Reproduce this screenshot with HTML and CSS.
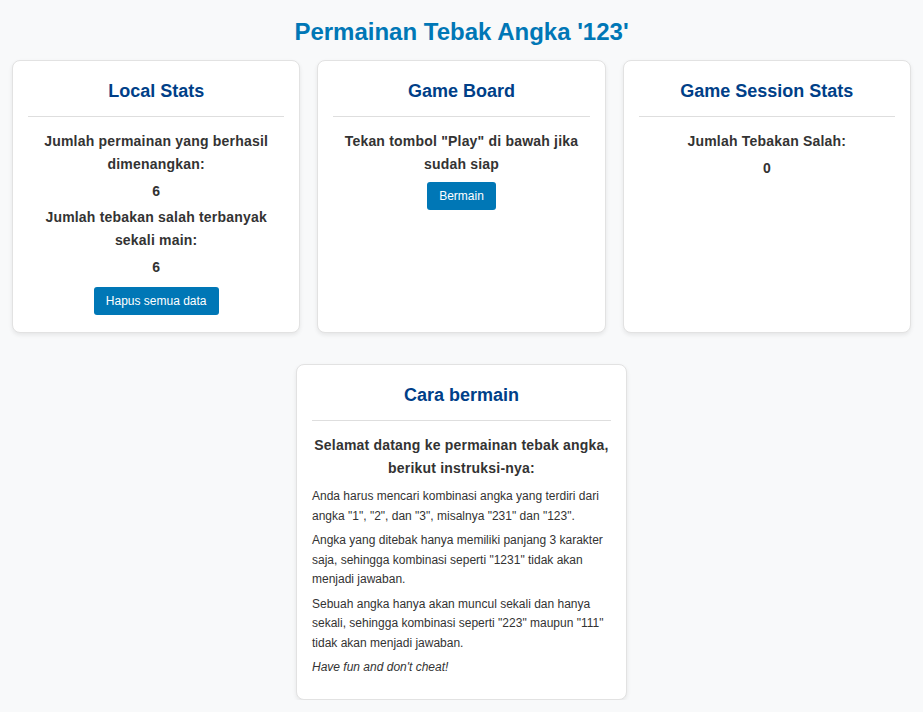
FILE: index.html
```html
<!DOCTYPE html>
<html lang="id">
<head>
<meta charset="utf-8">
<title>Permainan Tebak Angka '123'</title>
<link rel="stylesheet" href="styles.css">
</head>
<body>
<h1 class="title">Permainan Tebak Angka '123'</h1>
<main class="row">
  <section class="card">
    <h2 class="card-title">Local Stats</h2>
    <hr class="divider">
    <p class="label">Jumlah permainan yang berhasil dimenangkan:</p>
    <p class="value">6</p>
    <p class="label">Jumlah tebakan salah terbanyak sekali main:</p>
    <p class="value">6</p>
    <button class="btn btn-clear">Hapus semua data</button>
  </section>
  <section class="card">
    <h2 class="card-title">Game Board</h2>
    <hr class="divider">
    <p class="label">Tekan tombol "Play" di bawah jika sudah siap</p>
    <button class="btn btn-play">Bermain</button>
  </section>
  <section class="card">
    <h2 class="card-title">Game Session Stats</h2>
    <hr class="divider">
    <p class="label">Jumlah Tebakan Salah:</p>
    <p class="value">0</p>
  </section>
</main>
<section class="card card-help">
  <h2 class="card-title">Cara bermain</h2>
  <hr class="divider">
  <p class="label intro">Selamat datang ke permainan tebak angka, berikut instruksi-nya:</p>
  <p class="text">Anda harus mencari kombinasi angka yang terdiri dari angka "1", "2", dan "3", misalnya "231" dan "123".</p>
  <p class="text">Angka yang ditebak hanya memiliki panjang 3 karakter saja, sehingga kombinasi seperti "1231" tidak akan menjadi jawaban.</p>
  <p class="text">Sebuah angka hanya akan muncul sekali dan hanya sekali, sehingga kombinasi seperti "223" maupun "111" tidak akan menjadi jawaban.</p>
  <p class="text"><em>Have fun and don't cheat!</em></p>
</section>
</body>
</html>
```
FILE: styles.css
```css
* { box-sizing: border-box; }

body {
  margin: 0;
  background: #f8f9fa;
  font-family: "Liberation Sans", Arial, sans-serif;
  color: #333;
}

.title {
  margin: 20px 0 16px;
  font-size: 24px;
  line-height: 24px;
  text-align: center;
  color: #0077b6;
}

.row {
  display: grid;
  grid-template-columns: repeat(3, 1fr);
  gap: 17px;
  padding: 0 12px;
}

.card {
  background: #fff;
  border: 1px solid #e2e2e2;
  border-radius: 8px;
  box-shadow: 0 2px 4px rgba(0, 0, 0, 0.08);
  padding: 19px 15px 15px;
  height: 273px;
  text-align: center;
}

.card-title {
  margin: 0;
  font-size: 18px;
  line-height: 22px;
  color: #003f88;
}

.divider {
  border: 0;
  border-top: 1px solid #dedede;
  margin: 14px 0 13px;
}

.label {
  margin: 0;
  font-size: 14px;
  line-height: 23px;
  font-weight: bold;
  letter-spacing: 0.2px;
}

.value {
  margin: 4px 0 3px;
  font-size: 14px;
  line-height: 23px;
  font-weight: bold;
}

.btn {
  display: inline-block;
  height: 28px;
  padding: 0 12px;
  border: 0;
  border-radius: 3px;
  background: #0077b6;
  color: #fff;
  font-family: "Liberation Sans", Arial, sans-serif;
  font-size: 12px;
}

.btn-clear { margin-top: 5px; }
.btn-play { margin-top: 6px; }

.card-help {
  width: 331px;
  height: auto;
  margin: 31px auto 0;
  padding-bottom: 16px;
}

.intro {
  margin-bottom: 7px;
  margin-left: -4px;
  margin-right: -4px;
}

.text {
  margin: 0 0 5px;
  font-size: 12px;
  line-height: 19.5px;
  text-align: left;
}
```
